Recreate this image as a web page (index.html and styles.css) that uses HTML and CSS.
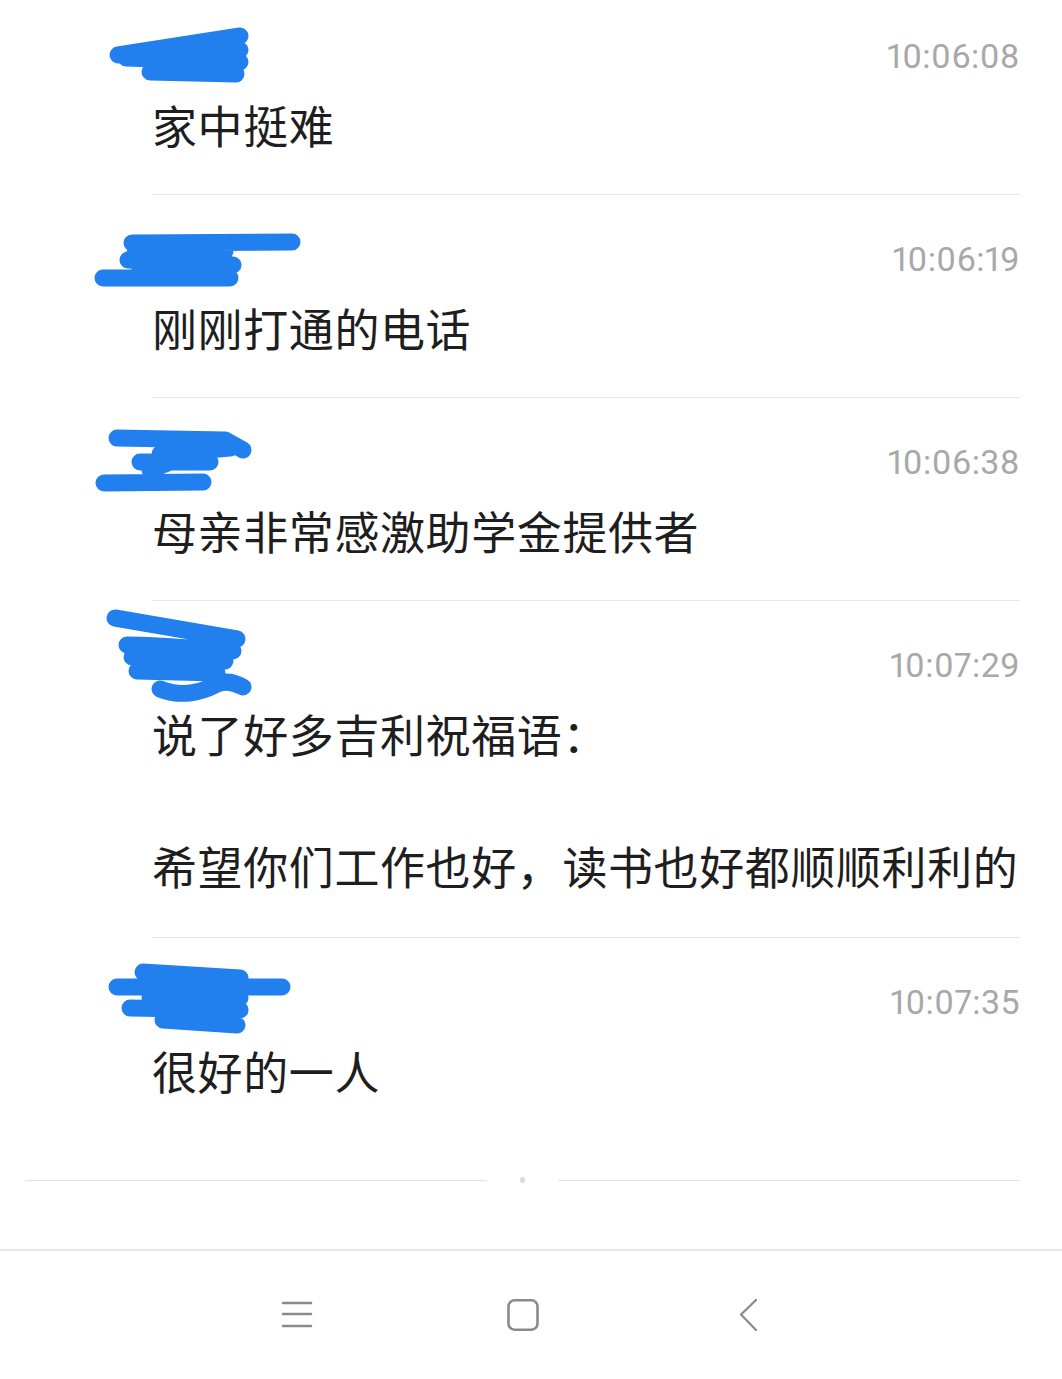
FILE: index.html
```html
<!DOCTYPE html>
<html lang="zh-CN">
<head>
<meta charset="utf-8">
<title>消息</title>
<link rel="stylesheet" href="styles.css">
</head>
<body>
<div class="screen">
  <main class="list">
    <article class="item">
      <header class="meta">
        <svg class="redact" viewBox="0 0 220 100" aria-hidden="true">
          <path d="M18 49 L140 30 M26 52 L140 56 M50 66 L136 68 M40 48 L130 48 M70 62 L140 44" />
        </svg>
        <time class="time">10:06:08</time>
      </header>
      <p class="msg">家中挺难</p>
    </article>
    <article class="item">
      <header class="meta">
        <svg class="redact" viewBox="0 0 220 100" aria-hidden="true">
          <path d="M32 34 L192 33 M28 51 L133 56 M3 69 L130 69 M35 44 L125 42 M40 60 L120 60" />
        </svg>
        <time class="time">10:06:19</time>
      </header>
      <p class="msg">刚刚打通的电话</p>
    </article>
    <article class="item">
      <header class="meta">
        <svg class="redact" viewBox="0 0 220 100" aria-hidden="true">
          <path d="M17 26 L125 28 L143 38 M40 50 L110 50 M50 58 L105 36 M4 71 L103 70 M60 42 L130 36" />
        </svg>
        <time class="time">10:06:38</time>
      </header>
      <p class="msg">母亲非常感激助学金提供者</p>
    </article>
    <article class="item item-tall">
      <header class="meta">
        <svg class="redact" viewBox="0 0 220 100" aria-hidden="true">
          <path d="M15 3 L137 24 M27 30 C60 30 100 34 133 36 M37 56 L117 58 M32 42 L125 46 M60 74 C80 82 100 78 115 70 C125 64 135 68 143 72" />
        </svg>
        <time class="time">10:07:29</time>
      </header>
      <p class="msg">说了好多吉利祝福语：<br><br>希望你们工作也好，读书也好都顺顺利利的</p>
    </article>
    <article class="item">
      <header class="meta">
        <svg class="redact" viewBox="0 0 220 100" aria-hidden="true">
          <path d="M43 20 L140 26 M17 35 L182 35 M30 56 L140 58 M63 68 L137 73 M50 46 L140 46" />
        </svg>
        <time class="time">10:07:35</time>
      </header>
      <p class="msg">很好的一人</p>
    </article>
  </main>

  <div class="end">
    <span class="rule"></span>
    <span class="dot"></span>
    <span class="rule"></span>
  </div>

  <nav class="navbar">
    <span class="nav-cell">
      <svg class="nav-icon" viewBox="0 0 32 32" aria-label="菜单">
        <path d="M2 4 H30 M2 15 H30 M2 27 H30" />
      </svg>
    </span>
    <span class="nav-cell">
      <svg class="nav-icon" viewBox="0 0 32 32" aria-label="主页">
        <rect x="1.5" y="1.3" width="29" height="29.4" rx="6" />
      </svg>
    </span>
    <span class="nav-cell">
      <svg class="nav-icon thin" viewBox="0 0 32 32" aria-label="返回">
        <path d="M23 1 L8 15.5 L23 31" />
      </svg>
    </span>
  </nav>
</div>
</body>
</html>
```

FILE: styles.css
```css
html, body {
  margin: 0;
  padding: 0;
  background: #ffffff;
}

.screen {
  display: flex;
  flex-direction: column;
  min-height: 100vh;
}

.list {
  margin: 0 42px 0 152px;
}

.item {
  padding: 44px 0 36px;
  border-bottom: 1px solid #e6e6e6;
}

.item:first-child {
  padding-top: 36px;
}

.item-tall {
  padding-bottom: 38px;
}

.item:last-child {
  border-bottom: none;
}

.meta {
  position: relative;
  height: 40px;
  display: flex;
  justify-content: flex-end;
  align-items: center;
}

.redact {
  position: absolute;
  left: -52px;
  top: -30px;
  width: 220px;
  height: 100px;
  overflow: visible;
}

.redact path {
  fill: none;
  stroke: #2280ee;
  stroke-width: 17;
  stroke-linecap: round;
  stroke-linejoin: round;
}

.time {
  font-family: Roboto, "Liberation Sans", sans-serif;
  font-size: 34px;
  font-variant-numeric: proportional-nums;
  letter-spacing: 0.4px;
  line-height: 40px;
  color: #a8a8a8;
}

.msg {
  margin: 16px 0 0;
  font-family: "Noto Sans CJK SC", "Noto Sans", sans-serif;
  font-size: 45px;
  letter-spacing: 0.6px;
  line-height: 66px;
  color: #1e1e1e;
}

.end {
  display: flex;
  align-items: center;
  gap: 33px;
  margin-top: 37px;
  padding: 0 42px 0 25px;
}

.rule {
  flex: 1;
  height: 1px;
  background: #e4e4e4;
}

.dot {
  width: 5px;
  height: 6px;
  border-radius: 3px;
  background: #dcdcdc;
}

.navbar {
  margin-top: auto;
  height: 128px;
  border-top: 2px solid #e8e8e8;
  background: #ffffff;
  display: grid;
  grid-template-columns: repeat(3, 226px);
  justify-content: center;
  align-items: center;
  padding-right: 16px;
}

.nav-cell {
  display: flex;
  justify-content: center;
}

.nav-icon {
  width: 32px;
  height: 32px;
  display: block;
  overflow: visible;
}

.nav-icon path,
.nav-icon rect {
  fill: none;
  stroke: #8a8a8a;
  stroke-width: 2.6;
  stroke-linecap: round;
  stroke-linejoin: round;
}

.nav-icon.thin path {
  stroke-width: 2.3;
}
```
